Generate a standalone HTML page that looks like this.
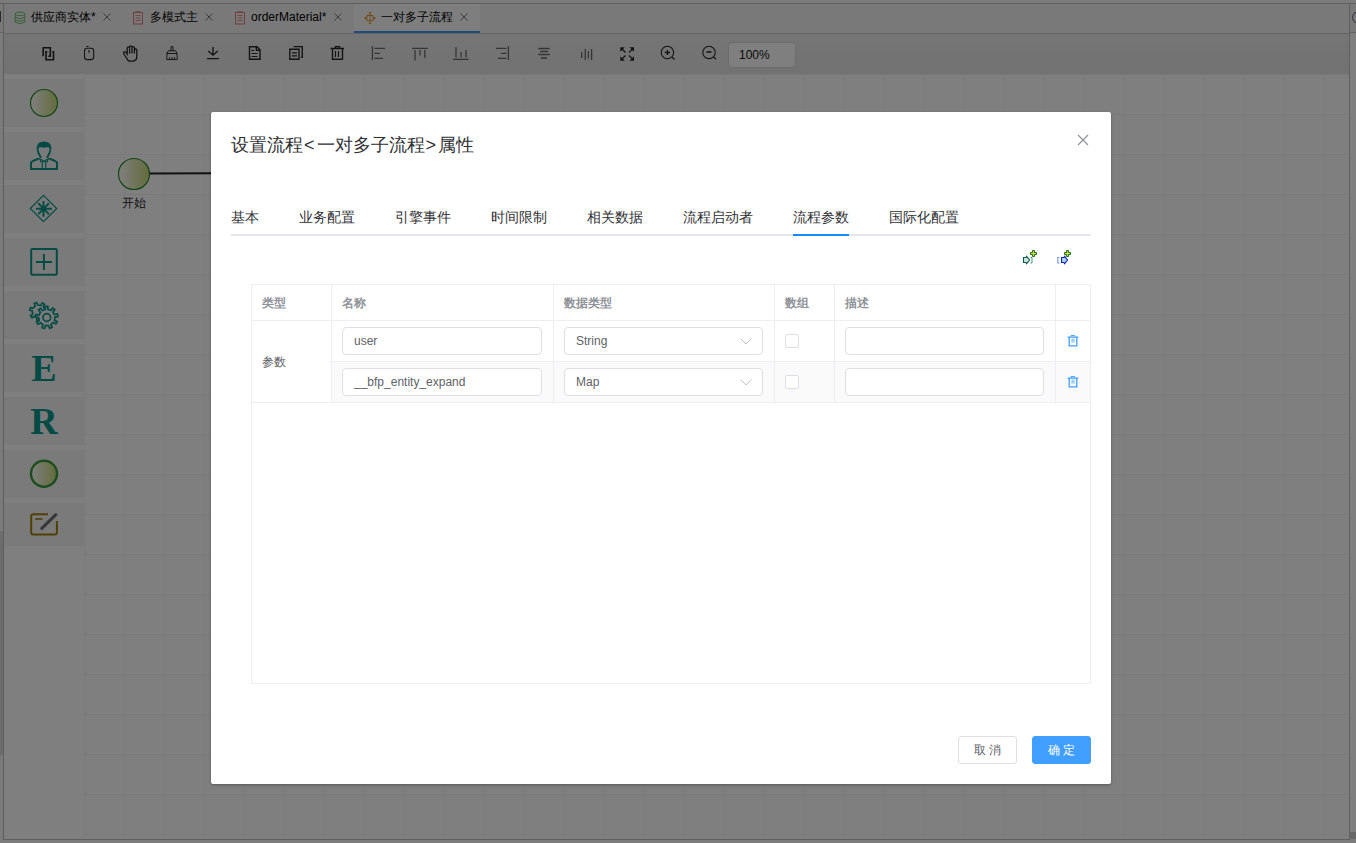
<!DOCTYPE html>
<html><head><meta charset="utf-8">
<style>
*{box-sizing:border-box}
html,body{margin:0;padding:0}
body{width:1356px;height:843px;position:relative;overflow:hidden;background:#f7f7f7;font-family:"Liberation Sans",sans-serif;color:#333}
.abs{position:absolute}
#frame{left:3px;top:3px;width:1347px;height:837px;border:1px solid #bcbcbc;background:#fff}
#tabbar{left:4px;top:4px;width:1345px;height:30px;background:#f3f3f3;border-bottom:1px solid #c9c9c9}
.tab{position:absolute;top:3px;height:29px;font-size:12px;line-height:29px;color:#000;white-space:nowrap}
.tab .x{position:absolute;top:9px;width:9px;height:9px}
#toolbar{left:4px;top:34px;width:1345px;height:40px;background:linear-gradient(#ebebeb,#e4e4e4)}
.ti{position:absolute;top:46px;width:14px;height:14px}
#zoombox{left:728px;top:42px;width:68px;height:26px;background:#ffffff;border:1px solid #d8d8d8;border-radius:4px;font-size:12px;line-height:24px;padding-left:10px;color:#111}
#palette{left:4px;top:74px;width:80px;height:765px;background:#fefefe}
.pit{position:absolute;left:0;width:80px;height:48px;background:#f5f5f5}
#canvas{left:84px;top:74px;width:1265px;height:765px;background-color:#fff;
 background-image:linear-gradient(to right,#f4f4f4 1px,transparent 1px),linear-gradient(to bottom,#f4f4f4 1px,transparent 1px);
 background-size:40px 40px;background-position:0 0}
#overlay{left:0;top:0;width:1356px;height:843px;background:rgba(0,0,0,.5)}
#dlg{left:211px;top:112px;width:900px;height:672px;background:#fff;border-radius:2px;box-shadow:0 1px 3px rgba(0,0,0,.3)}
.dtitle{position:absolute;left:20px;top:21px;font-size:18px;line-height:24px;color:#303133;white-space:nowrap}
.dtab{position:absolute;top:95px;font-size:14px;line-height:20px;color:#303133;white-space:nowrap}
#navline{left:20px;top:122px;width:860px;height:2px;background:#e4e7ed}
#navbar{left:582px;top:122px;width:56px;height:2px;background:#148bff}
#tbl{left:40px;top:172px;width:840px;height:400px;border:1px solid #ebeef5}
.hl{position:absolute;background:#ebeef5}
.th{position:absolute;top:11px;font-size:12px;font-weight:bold;color:#909399;line-height:14px;white-space:nowrap}
.inp{position:absolute;height:28px;border:1px solid #dcdfe6;border-radius:4px;background:#fff;font-size:12px;line-height:26px;padding-left:11px;color:#606266;white-space:nowrap}
.cb{position:absolute;width:14px;height:14px;border:1px solid #dcdfe6;border-radius:2px;background:#fff}
.btn{position:absolute;top:624px;height:28px;width:59px;border-radius:3px;font-size:12px;line-height:26px;text-align:center;white-space:nowrap}
</style></head><body>
<div id="frame" class="abs"></div>
<div class="abs" style="left:0;top:3px;width:1356px;height:1px;background:#bcbcbc"></div>
<div class="abs" style="left:0;top:4px;width:3px;height:29px;background:#f3f3f3;border-bottom:1px solid #c9c9c9"></div>
<div class="abs" style="left:0;top:11px;width:1px;height:11px;background:#555"></div>
<div id="tabbar" class="abs"></div>
<div class="abs" style="left:354px;top:4px;width:126px;height:29px;background:#fcfcfc"></div>
<div class="abs" style="left:354px;top:31px;width:126px;height:2px;background:#3f97ff"></div>
<!-- tab icons -->
<svg class="abs" style="left:14px;top:11px" width="12" height="14" viewBox="0 0 12 14"><g fill="none" stroke="#58b858" stroke-width="0.85"><ellipse cx="6" cy="2.8" rx="4.8" ry="1.8"/><path d="M1.2 2.8V11.2Q6 14.2 10.8 11.2V2.8M1.2 6.2Q6 9.2 10.8 6.2M1.2 8.9Q6 11.9 10.8 8.9"/></g></svg>
<svg class="abs" style="left:132px;top:11px" width="12" height="14" viewBox="0 0 12 14"><g fill="none" stroke="#e06868" stroke-width="0.85"><rect x="1.5" y="1.5" width="9" height="11.5"/><path d="M3.5 0.8H8.5M3.5 4.5H8.5M3.5 7H8.5M3.5 9.5H8.5" stroke-width="0.75"/></g></svg>
<svg class="abs" style="left:234px;top:11px" width="12" height="14" viewBox="0 0 12 14"><g fill="none" stroke="#e06868" stroke-width="0.85"><rect x="1.5" y="1.5" width="9" height="11.5"/><path d="M3.5 0.8H8.5M3.5 4.5H8.5M3.5 7H8.5M3.5 9.5H8.5" stroke-width="0.75"/></g></svg>
<svg class="abs" style="left:363px;top:11px" width="14" height="14" viewBox="0 0 14 14"><g fill="#e09a38" stroke="none"><path d="M5.6 0.9H8.4L7.6 2.2V4.4H6.4V2.2Z"/><path d="M5.6 13.1H8.4L7.6 11.8V9.6H6.4V11.8Z"/><path d="M3.2 5.4L0.9 7.1L3.2 8.8Z"/><path d="M10.8 5.4L13.1 7.1L10.8 8.8Z"/><path d="M6 5.4H8V6H7.4V8.2H8V8.8H6V8.2H6.6V6H6Z"/></g><rect x="3.8" y="4.4" width="6.4" height="5.4" rx="1" fill="none" stroke="#e09a38" stroke-width="1.1"/></svg>
<div class="tab" style="left:31px">供应商实体*</div>
<div class="tab" style="left:150px">多模式主</div>
<div class="tab" style="left:251px">orderMaterial*</div>
<div class="tab" style="left:381px">一对多子流程</div>
<svg class="abs" style="left:103px;top:13px" width="8" height="8" viewBox="0 0 8 8"><path d="M0.5 0.5L7.5 7.5M7.5 0.5L0.5 7.5" stroke="#6a6a6a" stroke-width="0.9"/></svg>
<svg class="abs" style="left:205px;top:13px" width="8" height="8" viewBox="0 0 8 8"><path d="M0.5 0.5L7.5 7.5M7.5 0.5L0.5 7.5" stroke="#6a6a6a" stroke-width="0.9"/></svg>
<svg class="abs" style="left:334px;top:13px" width="8" height="8" viewBox="0 0 8 8"><path d="M0.5 0.5L7.5 7.5M7.5 0.5L0.5 7.5" stroke="#6a6a6a" stroke-width="0.9"/></svg>
<svg class="abs" style="left:460px;top:13px" width="8" height="8" viewBox="0 0 8 8"><path d="M0.5 0.5L7.5 7.5M7.5 0.5L0.5 7.5" stroke="#6a6a6a" stroke-width="0.9"/></svg>
<div id="toolbar" class="abs"></div>
<svg class="abs" style="left:0;top:0" width="1356" height="74" viewBox="0 0 1356 74">
 <g fill="none" stroke="#262626" stroke-width="1.5">
  <!-- copy -->
  <path stroke-width="1.6" d="M43.2 56.3V47.8H50.3V56.3H48.4M47.3 51.8H46V59.8H53.5V51.8H52.2"/>
  <!-- mouse -->
  <rect x="84.5" y="48.3" width="9.2" height="11.3" rx="2.6" stroke-width="1.1"/><path d="M86.2 46.4H88.6" stroke-width="1"/><path d="M89 50V52.7" stroke-width="1.1"/>
  <!-- hand -->
  <path stroke-width="1.3" d="M126.5 58 L123.8 53.8 Q123.2 52.3 124.6 52 Q125.6 51.8 126.6 53 L127.2 54 V48.2 Q127.2 46.8 128.4 46.8 Q129.6 46.8 129.6 48.2 V47.2 Q129.6 45.9 130.8 45.9 Q132 45.9 132 47.2 V47.8 Q132 46.6 133.2 46.6 Q134.4 46.6 134.4 47.8 V50.2 Q134.4 49 135.6 49 Q136.8 49 136.8 50.2 V56.5 Q136.8 61.2 132 61.2 H130 Q127.8 61.2 126.5 58 Z M129.6 48.5V53.5 M132 47.5V53.5 M134.4 48V53.5"/>
  <!-- broom -->
  <path stroke-width="0.95" d="M171 50.8V46.8Q172 46 173 46.8V50.8M168.3 50.8H175.7L177.2 53.5H166.8Z M167.2 53.5Q166.6 57 166.8 59.6H177.2Q177.4 57 176.8 53.5M169.8 59.5V57.2M172.2 59.5V57.2M174.6 59.5V57.2"/>
  <!-- download -->
  <path stroke-width="1.3" d="M213 47V54.5M208.3 51L213 55.2L217.7 51M207 58.6H219"/>
  <!-- doc -->
  <path stroke-width="1.4" d="M249.5 46.8H257L260 49.8V59.3H249.5Z M256.3 47V50.3H259.8"/>
  <path stroke-width="1.2" d="M251.5 50.4H254M251.5 53.5H257.5M251.5 56.5H257.5"/>
  <!-- copy docs -->
  <path stroke-width="1.4" d="M289.8 49.3H299V59.3H289.8Z M293.5 46.6H302.3V57.3H301"/>
  <path stroke-width="1.2" d="M292 52.8H297M292 55.8H297"/>
  <!-- trash -->
  <path stroke-width="1.4" d="M330.5 48.5H344M335.5 48.3V46.6H339.5V48.3M332.5 48.5V59.3H342.5V48.5"/>
  <path stroke-width="1.2" d="M335.5 51V57M338.5 51V57"/>
 </g>
 <g fill="none" stroke="#6a6a6a" stroke-width="1.3">
  <path d="M372.4 46V60M374.5 48.4H385M374.5 53.4H380M374.5 58.4H383"/>
  <path d="M412 48.4H428M415 50V60.5M420 50V55.5M424.8 50V58"/>
  <path d="M453 59.4H468.6M456 47V57.6M461 52V57.6M466 50V57.6"/>
  <path d="M508.4 46V60M496 48.4H506.5M500.8 53.4H506.5M498 58.4H506.5"/>
  <path d="M538.3 48.5H549.8M540 51.5H548M538.3 54.5H549.8M541 58H547"/>
  <path d="M581.7 52V58M585.3 49V60M588.4 51V58.5M591.6 49V60"/>
 </g>
 <g fill="none" stroke="#262626" stroke-width="1.3">
  <path stroke-width="1.2" d="M621.5 48.5L625.5 52.5M633 48.5L629 52.5M621.5 59.5L625.5 55.5M633 59.5L629 55.5"/>
  <path stroke="none" fill="#262626" d="M620.3 47.2H624.8L620.3 51.7Z M634 47.2H629.5L634 51.7Z M620.3 60.8H624.8L620.3 56.3Z M634 60.8H629.5L634 56.3Z"/>
  <circle cx="667.4" cy="52.5" r="6.2" stroke-width="1.1"/><path d="M672 57L674.5 59.5M664.8 52.5H670M667.4 49.9V55.1"/>
  <circle cx="709" cy="52.4" r="6.2" stroke-width="1.1"/><path d="M713.6 56.9L716 59.3M706.5 52H711.5"/>
 </g>
</svg>
<div id="zoombox" class="abs">100%</div>
<div id="palette" class="abs"><div class="pit" style="top:5px"></div><div class="pit" style="top:58px"></div><div class="pit" style="top:111px"></div><div class="pit" style="top:164px"></div><div class="pit" style="top:217px"></div><div class="pit" style="top:270px"></div><div class="pit" style="top:323px"></div><div class="pit" style="top:376px"></div><div class="pit" style="top:429px;height:43px"></div></div>
<svg class="abs" style="left:0;top:74px" width="84" height="480" viewBox="0 74 84 480">
 <defs>
  <linearGradient id="sg" x1="0" x2="1" y1="0" y2="0"><stop offset="0" stop-color="#ffffff"/><stop offset="1" stop-color="#c6d878"/></linearGradient>
 </defs>
 <circle cx="44" cy="103" r="13.5" fill="url(#sg)" stroke="#2a8a2a" stroke-width="1.2"/>
 <g fill="none" stroke="#0b968b" stroke-width="1.8">
  <path d="M37.6 147Q37.2 152.5 41.2 157.6M50.4 147Q50.8 152.5 46.8 157.6"/>
  <path d="M39.8 158.6Q34.5 159.8 31 162.2V169H57V162.2Q53.5 159.8 48.2 158.6" stroke-width="2"/>
  <path d="M40.6 159.2L44 161.2L47.4 159.2L47.6 161.8H40.4Z" stroke-width="1.1"/>
  <path d="M42.3 162V168.5M45.7 162V168.5" stroke-width="1.2"/>
 </g>
 <path d="M37 148.6Q36.4 144.5 39 142.9Q40.2 141.6 41.6 142.2Q42.8 141 44 141.6Q45.2 141 46.4 142.2Q47.8 141.6 49 142.9Q51.6 144.5 51 148.6Q47.6 146.6 44 147.8Q40.4 146.6 37 148.6Z" fill="#0b968b"/>
 <path d="M43.5 195.3L56.7 208.5L43.5 221.7L30.3 208.5Z" fill="none" stroke="#0b968b" stroke-width="1.2"/>
 <path d="M43.5 201V216.8M35.9 208.8H52M38.3 203.3L48.9 214.1M48.9 203.3L38.3 214.1" fill="none" stroke="#0b968b" stroke-width="2"/>
 <rect x="31.2" y="248.9" width="25.6" height="25.9" rx="1" fill="none" stroke="#0b968b" stroke-width="2"/>
 <path d="M43.9 254V270M35.9 262H52" fill="none" stroke="#0b968b" stroke-width="2"/>
 <g transform="translate(30,295)" fill="none" stroke="#0b968b" stroke-width="1.7">
  <path d="M14.44 19.93 L16.39 21.70 L14.54 23.69 L12.64 21.87 L9.63 23.05 L9.47 25.68 L6.76 25.47 L6.99 22.85 L4.20 21.23 L2.04 22.74 L0.51 20.50 L2.71 19.04 L2.23 15.85 L-0.29 15.11 L0.51 12.51 L3.01 13.32 L5.21 10.96 L4.22 8.52 L6.75 7.53 L7.68 10.00 L10.89 10.24 L12.18 7.94 L14.53 9.30 L13.18 11.57 L15.00 14.23 L17.60 13.81 L18.00 16.49 L15.39 16.85Z"/>
  <path d="M24.53 25.25 L27.18 26.69 L25.95 28.96 L23.30 27.50 L20.95 29.57 L22.06 32.39 L19.66 33.33 L18.56 30.51 L15.43 30.59 L14.47 33.46 L12.03 32.63 L13.00 29.77 L10.56 27.82 L7.97 29.40 L6.63 27.20 L9.22 25.63 L8.60 22.56 L5.61 22.11 L5.99 19.56 L8.98 20.02 L10.48 17.27 L8.48 15.01 L10.41 13.30 L12.41 15.58 L15.32 14.43 L15.24 11.41 L17.81 11.35 L17.88 14.37 L20.85 15.37 L22.73 13.00 L24.75 14.61 L22.85 16.97 L24.49 19.64 L27.45 19.04 L27.96 21.56 L24.99 22.16Z" fill="#f5f5f5"/>
  <circle cx="16.8" cy="22.5" r="3.8"/>
 </g>
 <text x="44" y="381" text-anchor="middle" font-family="Liberation Serif" font-weight="bold" font-size="38" fill="#0b968b">E</text>
 <text x="44" y="434" text-anchor="middle" font-family="Liberation Serif" font-weight="bold" font-size="38" fill="#0b968b">R</text>
 <circle cx="44" cy="473.7" r="13" fill="url(#sg)" stroke="#3a9a3a" stroke-width="2.4"/>
 <path d="M48 514.2H33Q31.2 514.2 31.2 516V532.6Q31.2 534.5 33 534.5H55Q56.9 534.5 56.9 532.6V521" fill="none" stroke="#a08008" stroke-width="2"/>
 <path d="M35.2 519H42.5" stroke="#a08008" stroke-width="1.6"/>
 <path d="M41.8 528.3L55.8 514.7" stroke="#707070" stroke-width="3.2" stroke-linecap="round"/>
</svg>
<div id="canvas" class="abs"></div>
<svg class="abs" style="left:84px;top:74px" width="200" height="160" viewBox="84 74 200 160">
 <path d="M150 173.6L215 173.2" stroke="#222" stroke-width="2"/>
 <circle cx="134" cy="174" r="15.5" fill="url(#sg2)" stroke="#2a8a2a" stroke-width="1.2"/>
 <defs><linearGradient id="sg2" x1="0" x2="1" y1="0" y2="0"><stop offset="0" stop-color="#ffffff"/><stop offset="1" stop-color="#c6d878"/></linearGradient></defs>
</svg>
<div class="abs" style="left:122px;top:196px;font-size:12px;line-height:14px;color:#222">开始</div>

<div class="abs" style="left:1350px;top:3px;width:6px;height:30px;border-top:1px solid #bcbcbc;border-bottom:1px solid #c9c9c9;background:#f3f3f3"></div>
<svg class="abs" style="left:1350px;top:10px" width="6" height="16" viewBox="0 0 6 16"><circle cx="8" cy="7.5" r="5.5" fill="none" stroke="#8a7a9a" stroke-width="1.2"/></svg>
<div class="abs" style="left:1354px;top:42px;width:2px;height:7px;background:#a07850"></div>
<div class="abs" style="left:1349px;top:832px;width:7px;height:7px;border-radius:3px 0 0 3px;background:#d0d0d0"></div>
<div class="abs" style="left:1350px;top:34px;width:6px;height:798px;background:#fefefe"></div>
<div class="abs" style="left:0;top:531px;width:3px;height:225px;border-radius:0 3px 3px 0;background:#d8d8d8"></div>
<div id="overlay" class="abs"></div>

<div id="dlg" class="abs">
  <div class="dtitle">设置流程<span style="padding:0 2px 0 1px">&lt;</span>一对多子流程<span style="padding:0 2px 0 1px">&gt;</span>属性</div>
  <svg class="abs" style="left:866px;top:22px" width="12" height="12" viewBox="0 0 12 12"><path d="M1 1L11 11M11 1L1 11" stroke="#909399" stroke-width="1.2"/></svg>
  <div class="dtab" style="left:20px">基本</div>
  <div class="dtab" style="left:88px">业务配置</div>
  <div class="dtab" style="left:184px">引擎事件</div>
  <div class="dtab" style="left:280px">时间限制</div>
  <div class="dtab" style="left:376px">相关数据</div>
  <div class="dtab" style="left:472px">流程启动者</div>
  <div class="dtab" style="left:582px">流程参数</div>
  <div class="dtab" style="left:678px">国际化配置</div>
  <div id="navline" class="abs"></div>
  <div id="navbar" class="abs"></div>

  <svg class="abs" style="left:811px;top:137px" width="16" height="16" viewBox="0 0 16 16">
   <path d="M10.5 1.5H12.5V3.5H14.5V5.5H12.5V7.5H10.5V5.5H8.5V3.5H10.5Z" fill="#d0d840" stroke="#1a7020" stroke-width="1"/>
   <path d="M1.5 8.5H4L4.6 7.3L7.6 11L4.6 14.7L4 13.5H1.5Z" fill="#cfe3e0" stroke="#0e5a4a" stroke-width="1.1"/>
   <path d="M8.5 8.5H10V14H8.5" fill="none" stroke="#3a9a8a" stroke-width="1"/>
  </svg>
  <svg class="abs" style="left:845px;top:137px" width="16" height="16" viewBox="0 0 16 16">
   <path d="M10.5 1.5H12.5V3.5H14.5V5.5H12.5V7.5H10.5V5.5H8.5V3.5H10.5Z" fill="#d0d840" stroke="#1a7020" stroke-width="1"/>
   <path d="M3.5 8.5H1.8V14H3.5" fill="none" stroke="#7a9ae8" stroke-width="1.1"/>
   <path d="M5.5 8.5H8L8.6 7.3L11.6 11L8.6 14.7L8 13.5H5.5Z" fill="#a8d0f4" stroke="#1a2ab0" stroke-width="1.1"/>
  </svg>
  <div id="tbl" class="abs">
    <div class="abs" style="left:80px;top:77px;width:758px;height:40px;background:#fafafa"></div>
    <div class="hl" style="left:0;top:35px;width:838px;height:1px"></div>
    <div class="hl" style="left:79px;top:76px;width:759px;height:1px"></div>
    <div class="hl" style="left:0;top:117px;width:838px;height:1px"></div>
    <div class="hl" style="left:79px;top:0;width:1px;height:118px"></div>
    <div class="hl" style="left:301px;top:0;width:1px;height:118px"></div>
    <div class="hl" style="left:522px;top:0;width:1px;height:118px"></div>
    <div class="hl" style="left:582px;top:0;width:1px;height:118px"></div>
    <div class="hl" style="left:803px;top:0;width:1px;height:118px"></div>
    <div class="th" style="left:10px">类型</div>
    <div class="th" style="left:90px">名称</div>
    <div class="th" style="left:312px">数据类型</div>
    <div class="th" style="left:533px">数组</div>
    <div class="th" style="left:593px">描述</div>
    <div class="abs" style="left:10px;top:70px;font-size:12px;line-height:14px;color:#606266">参数</div>
    <div class="inp" style="left:90px;top:42px;width:200px">user</div>
    <div class="inp" style="left:90px;top:83px;width:200px">__bfp_entity_expand</div>
    <div class="inp" style="left:312px;top:42px;width:199px">String<svg class="abs" style="left:175px;top:10px" width="12" height="7" viewBox="0 0 12 7"><path d="M0.5 0.5L6 6L11.5 0.5" fill="none" stroke="#c0c4cc" stroke-width="1"/></svg></div>
    <div class="inp" style="left:312px;top:83px;width:199px">Map<svg class="abs" style="left:175px;top:10px" width="12" height="7" viewBox="0 0 12 7"><path d="M0.5 0.5L6 6L11.5 0.5" fill="none" stroke="#c0c4cc" stroke-width="1"/></svg></div>
    <div class="cb" style="left:533px;top:49px"></div>
    <div class="cb" style="left:533px;top:90px"></div>
    <div class="inp" style="left:593px;top:42px;width:199px"></div>
    <div class="inp" style="left:593px;top:83px;width:199px"></div>
    <svg class="abs trash" style="left:815px;top:49px" width="13" height="13" viewBox="0 0 13 13"><path d="M4 2.6V1.6H7.8V2.6" fill="none" stroke="#409eff" stroke-width="1"/><path d="M0.6 3.2H11.4M2.2 3.2V11.8H9.8V3.2" fill="none" stroke="#409eff" stroke-width="1.3"/><path d="M4.3 4.5H7.7V8.8Q6 8.2 4.3 8.8Z" fill="#a0cfff"/></svg>
    <svg class="abs trash" style="left:815px;top:90px" width="13" height="13" viewBox="0 0 13 13"><path d="M4 2.6V1.6H7.8V2.6" fill="none" stroke="#409eff" stroke-width="1"/><path d="M0.6 3.2H11.4M2.2 3.2V11.8H9.8V3.2" fill="none" stroke="#409eff" stroke-width="1.3"/><path d="M4.3 4.5H7.7V8.8Q6 8.2 4.3 8.8Z" fill="#a0cfff"/></svg>
  </div>

  <div class="btn" style="left:747px;border:1px solid #dcdfe6;background:#fff;color:#606266">取 消</div>
  <div class="btn" style="left:821px;border:1px solid #409eff;background:#409eff;color:#fff">确 定</div>
</div>
</body></html>
